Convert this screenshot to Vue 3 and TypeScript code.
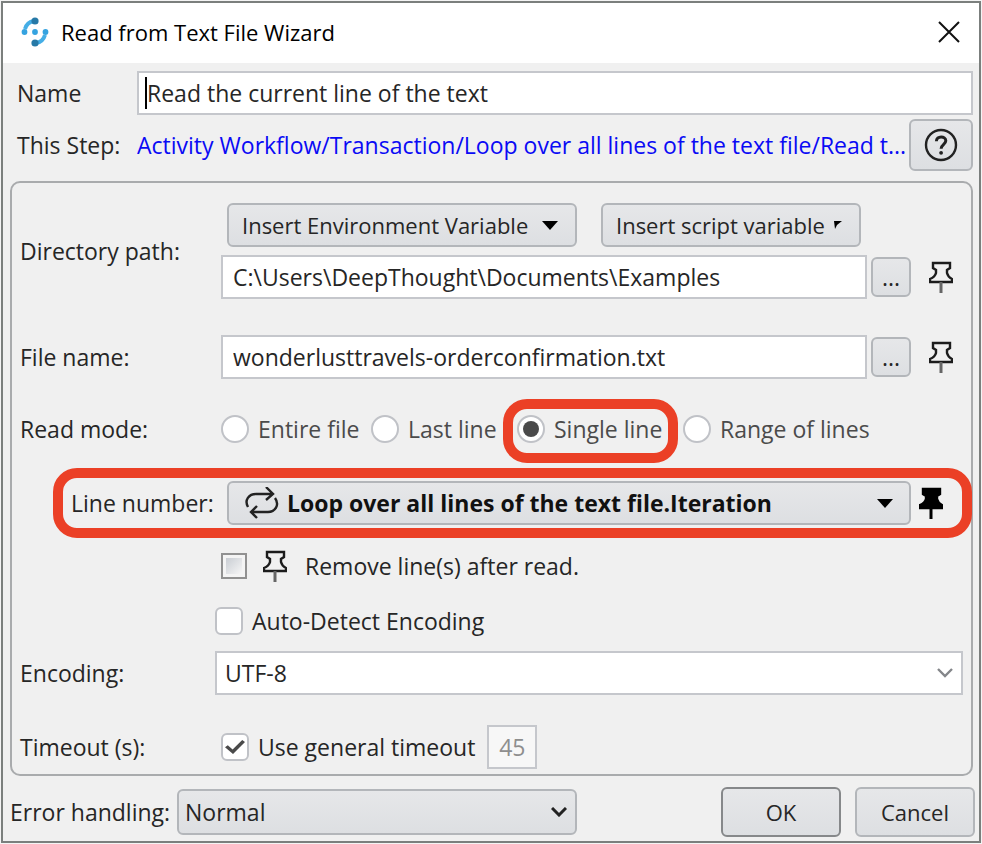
<script setup lang="ts">
import { ref } from 'vue'

const name = ref('Read the current line of the text')
const directory = ref('C:\\Users\\DeepThought\\Documents\\Examples')
const fileName = ref('wonderlusttravels-orderconfirmation.txt')
const readModes = ['Entire file', 'Last line', 'Single line', 'Range of lines']
const readMode = ref('Single line')
const removeLines = ref(false)
const autoDetect = ref(false)
const encoding = ref('UTF-8')
const useGeneralTimeout = ref(true)
const timeout = ref('45')
const errorHandling = ref('Normal')

const pinHead = 'M4 2 H21 V7 L18 9 V12 Q19 16 23 18 V21 H1 V18 Q6 16 7 12 V9 L4 7 Z'
const pinStem = 'M12 21 V32'
</script>

<template>
  <main class="dialog">
    <header class="titlebar">
      <svg class="logo" viewBox="0 0 28 30" aria-hidden="true">
        <path d="M4 12 Q6 5 13 4" fill="none" stroke="#45aee6" stroke-width="4" />
        <path d="M24 18 Q22 25 15 26" fill="none" stroke="#45aee6" stroke-width="4" />
        <circle cx="14" cy="4" r="3.6" fill="#2779a7" />
        <circle cx="14" cy="26" r="3.6" fill="#2779a7" />
        <circle cx="3.500" cy="15" r="2.900" fill="#35a3e0" />
        <circle cx="14" cy="15" r="2.900" fill="#35a3e0" />
        <circle cx="24.500" cy="15" r="2.900" fill="#35a3e0" />
      </svg>
      <h1>Read from Text File Wizard</h1>
      <button class="close" type="button" aria-label="Close">
        <svg viewBox="0 0 22 22"><path d="M1 1 L21 21 M21 1 L1 21" fill="none" stroke="#111" stroke-width="2" /></svg>
      </button>
    </header>

    <form class="body" @submit.prevent>
      <div class="top-row">
        <label for="name">Name</label>
        <div class="box name-box">
          <span class="caret"></span>
          <input id="name" v-model="name" type="text" />
        </div>
      </div>
      <div class="top-row step-row">
        <span>This Step:</span>
        <a href="#">Activity Workflow/Transaction/Loop over all lines of the text file/Read t...</a>
        <button class="btn help" type="button" aria-label="Help">
          <svg viewBox="0 0 34 34">
            <circle cx="17" cy="17" r="15" fill="none" stroke="#222" stroke-width="2.400" />
            <path d="M12.400 13.200 C12.400 7.600 21.800 7.600 21.800 12.800 C21.800 16.200 17.100 16.500 17.100 20.800" fill="none" stroke="#222" stroke-width="3" />
            <circle cx="17.100" cy="24.800" r="1.900" fill="#222" />
          </svg>
        </button>
      </div>

      <section class="panel">
        <div class="row directory">
          <label for="directory">Directory path:</label>
          <div class="stack">
            <div class="inserts">
              <button class="btn insert" type="button">
                Insert Environment Variable
                <svg class="tri" viewBox="0 0 16 9"><path d="M0 0 H16 L8 9 Z" /></svg>
              </button>
              <button class="btn insert script" type="button">
                Insert script variable
                <svg class="half-tri" viewBox="0 0 8 8"><path d="M0 0 H8 L3 4 L1 8 Z" /></svg>
              </button>
            </div>
            <div class="field">
              <input id="directory" v-model="directory" class="box" type="text" />
              <button class="btn browse" type="button" aria-label="Browse directory">...</button>
              <svg class="pin" viewBox="0 0 24 32"><path :d="pinHead" /><path class="stem" :d="pinStem" /></svg>
            </div>
          </div>
        </div>

        <div class="row file">
          <label for="file">File name:</label>
          <div class="field">
            <input id="file" v-model="fileName" class="box" type="text" />
            <button class="btn browse" type="button" aria-label="Browse file">...</button>
            <svg class="pin" viewBox="0 0 24 32"><path :d="pinHead" /><path class="stem" :d="pinStem" /></svg>
          </div>
        </div>

        <div class="row mode">
          <span>Read mode:</span>
          <div class="modes" role="radiogroup" aria-label="Read mode">
            <label v-for="mode in readModes" :key="mode" class="option" :class="{ highlight: mode === readMode }">
              <input v-model="readMode" type="radio" name="mode" :value="mode" />
              {{ mode }}
            </label>
          </div>
        </div>

        <div class="line-row highlight">
          <label for="line">Line number:</label>
          <button id="line" class="btn line-select" type="button">
            <svg class="loop" viewBox="0 0 34 32">
              <path d="M3 20 C-1 13 4 7 11 7 H28 M21 0 L28 7 L21 13 M30 11 C35 18 30 25 23 25 H6 M12 19 L6 25 L12 31" />
            </svg>
            <span>Loop over all lines of the text file.Iteration</span>
            <svg class="tri" viewBox="0 0 16 9"><path d="M0 0 H16 L8 9 Z" /></svg>
          </button>
          <svg class="pin solid" viewBox="0 0 24 32"><path :d="pinHead" /><path class="stem" :d="pinStem" /></svg>
        </div>

        <div class="row remove">
          <div class="check-line">
            <input id="remove" v-model="removeLines" class="classic" type="checkbox" />
            <svg class="pin" viewBox="0 0 24 32"><path :d="pinHead" /><path class="stem" :d="pinStem" /></svg>
            <label for="remove">Remove line(s) after read.</label>
          </div>
        </div>

        <div class="row auto">
          <label class="option">
            <input v-model="autoDetect" type="checkbox" />
            Auto-Detect Encoding
          </label>
        </div>

        <div class="row encoding">
          <label for="encoding">Encoding:</label>
          <div class="select">
            <select id="encoding" v-model="encoding" class="box">
              <option>UTF-8</option>
            </select>
            <svg class="chevron" viewBox="0 0 16 10"><path d="M1 1 L8 8 L15 1" /></svg>
          </div>
        </div>

        <div class="row timeout">
          <span>Timeout (s):</span>
          <div class="check-line">
            <label class="option">
              <input v-model="useGeneralTimeout" type="checkbox" />
              Use general timeout
            </label>
            <input v-model="timeout" class="box seconds" type="text" aria-label="Timeout in seconds" :disabled="useGeneralTimeout" />
          </div>
        </div>
      </section>

      <footer class="footer">
        <label for="errors">Error handling:</label>
        <div class="select error-select">
          <select id="errors" v-model="errorHandling" class="btn">
            <option>Normal</option>
          </select>
          <svg class="chevron dark" viewBox="0 0 16 10"><path d="M1 1 L8 8 L15 1" /></svg>
        </div>
        <button class="btn action primary" type="submit">OK</button>
        <button class="btn action" type="button">Cancel</button>
      </footer>
    </form>
  </main>
</template>

<style>
body {
  background: #f4f4f4;
}
</style>

<style scoped>
* {
  box-sizing: border-box;
}
.dialog {
  margin: 1px;
  border: 2px solid #7b7f7d;
  background: #f0f0f0;
  color: #262626;
  font-family: "Open Sans", "Noto Sans", sans-serif;
  font-size: 23px;
  line-height: 32px;
}
input,
select,
button {
  margin: 0;
  font: inherit;
  color: inherit;
}
svg {
  display: block;
  flex: none;
}
label,
span,
a,
h1,
button {
  white-space: nowrap;
}
.titlebar {
  display: flex;
  align-items: center;
  height: 60px;
  padding: 0 19px 2px 18px;
  background: #fff;
}
.logo {
  width: 28px;
  height: 30px;
}
h1 {
  flex: 1;
  margin: 0 0 0 12px;
  color: #000;
  font-size: 22px;
  font-weight: 500;
}
.close {
  padding: 0;
  border: 0;
  background: none;
}
.close svg {
  width: 22px;
  height: 22px;
}
.body {
  padding: 8px 4px 4px 7px;
}
.top-row {
  display: grid;
  grid-template-columns: 120px minmax(0, 1fr);
  align-items: center;
  padding: 0 2px 0 7px;
}
.box {
  height: 44px;
  padding: 0 10px;
  border: 2px solid #c5c7cc;
  border-radius: 0;
  background: #fff;
}
.name-box {
  display: flex;
  align-items: center;
  padding: 0 6px;
}
.caret {
  width: 2px;
  height: 32px;
  background: #000;
}
.name-box input {
  flex: 1;
  min-width: 0;
  padding: 0;
  border: 0;
  outline: 0;
  background: none;
}
.step-row {
  grid-template-columns: 120px minmax(0, 1fr) 64px;
  margin-top: 4px;
}
.step-row a {
  overflow: hidden;
  color: #0a0af5;
  text-decoration: none;
}
.btn {
  border: 2px solid #b3b6ba;
  border-radius: 6px;
  background: linear-gradient(#e6e7e9, #dddfe2);
}
.help {
  display: grid;
  place-items: center;
  height: 52px;
  padding: 0;
}
.help svg {
  width: 34px;
  height: 34px;
}
.panel {
  margin: 10px 2px 0 0;
  padding: 20px 8px 5px;
  border: 2px solid #a9abad;
  border-radius: 10px;
}
.row {
  display: grid;
  grid-template-columns: 195px minmax(0, 1fr);
  align-items: center;
}
.row > :last-child {
  grid-column: 2;
}
.stack {
  display: grid;
  gap: 8px;
}
.inserts {
  display: flex;
  gap: 24px;
  padding-left: 12px;
  font-size: 22px;
}
.insert {
  display: flex;
  align-items: center;
  justify-content: space-between;
  width: 350px;
  height: 44px;
  padding: 0 17px 0 13px;
}
.insert.script {
  width: 260px;
}
.tri {
  width: 16px;
  height: 9px;
  fill: #000;
}
.half-tri {
  width: 8px;
  height: 8px;
}
.field {
  display: flex;
  align-items: center;
  gap: 4px;
  padding: 0 10px 0 6px;
}
.field .box {
  flex: 1;
  min-width: 0;
}
.browse {
  width: 40px;
  height: 40px;
  padding: 0;
}
.pin {
  width: 24px;
  height: 32px;
  fill: none;
  stroke: #1c1c1c;
  stroke-width: 2.4;
}
.stem {
  stroke: #666;
  stroke-width: 3;
}
.field .pin {
  margin-left: 14px;
}
.pin.solid,
.pin.solid .stem {
  fill: #000;
  stroke: #000;
}
.file {
  margin-top: 36px;
}
.mode {
  margin-top: 34px;
}
.modes {
  display: grid;
  grid-template-columns: 150px 146px 166px auto;
  padding-left: 6px;
  color: #4b4b4b;
}
.option {
  display: flex;
  align-items: center;
  gap: 9px;
}
.option input {
  display: grid;
  flex: none;
  place-items: center;
  width: 28px;
  height: 28px;
  border: 2px solid #c0c2c7;
  border-radius: 6px;
  background: #fff;
  appearance: none;
}
.option input[type='radio'] {
  border-radius: 50%;
}
.option input[type='radio']:checked::before {
  width: 16px;
  height: 16px;
  border-radius: 50%;
  background: #4a4a4a;
  content: '';
}
.option input[type='checkbox']:checked::before {
  width: 20px;
  height: 14px;
  background: #4a4a4a;
  clip-path: polygon(0 52%, 14% 38%, 38% 68%, 86% 0, 100% 14%, 40% 100%);
  content: '';
}
.highlight {
  position: relative;
}
.highlight::after {
  position: absolute;
  inset: -14px 5px -18px -14px;
  border: 10px solid #eb4026;
  border-radius: 24px;
  content: '';
  pointer-events: none;
}
.line-row {
  display: flex;
  align-items: center;
  margin: 36px 0 0 51px;
  padding-right: 20px;
}
.line-row.highlight::after {
  inset: -13px -9px -13px -18px;
}
.line-row label {
  flex: 0 0 156px;
}
.line-select {
  display: flex;
  flex: 1;
  align-items: center;
  gap: 8px;
  height: 44px;
  margin-right: 8px;
  padding: 0 16px;
  color: #111;
  font-weight: 700;
  text-align: left;
}
.line-select span {
  flex: 1;
}
.loop {
  width: 34px;
  height: 32px;
  fill: none;
  stroke: #222;
  stroke-width: 2.4;
}
.remove {
  margin-top: 25px;
}
.check-line {
  display: flex;
  align-items: center;
  padding-left: 6px;
}
.classic {
  width: 26px;
  height: 26px;
  border: 2px solid #919191;
  background: linear-gradient(135deg, #c9cdd3, #f6f6f6) center / 16px 16px no-repeat #f4f4f4;
  appearance: none;
}
.remove .pin {
  margin: 0 18px 0 16px;
}
.auto {
  margin-top: 23px;
}
.encoding {
  margin-top: 14px;
}
.select {
  display: grid;
  align-items: center;
}
.select select,
.chevron {
  grid-area: 1 / 1;
}
.select select {
  width: 100%;
  padding: 0 8px;
  appearance: none;
}
.chevron {
  justify-self: end;
  width: 16px;
  height: 10px;
  margin-right: 10px;
  fill: none;
  stroke: #84868a;
  stroke-width: 2.4;
  pointer-events: none;
}
.chevron.dark {
  stroke: #222;
  stroke-width: 3;
}
.timeout {
  margin-top: 30px;
}
.seconds {
  width: 50px;
  margin-left: 12px;
  padding: 0;
  background: #f7f7f7;
  color: #8e8e8e;
  text-align: center;
}
.footer {
  display: flex;
  align-items: center;
  margin-top: 11px;
}
.footer label {
  flex: 0 0 167px;
}
.error-select {
  flex: 0 1 400px;
  margin-right: auto;
}
.error-select select {
  height: 46px;
  padding: 0 6px;
}
.action {
  width: 120px;
  height: 50px;
  padding: 0;
  font-size: 22px;
}
.action + .action {
  margin-left: 14px;
}
.primary {
  border-color: #86888a;
}
</style>
